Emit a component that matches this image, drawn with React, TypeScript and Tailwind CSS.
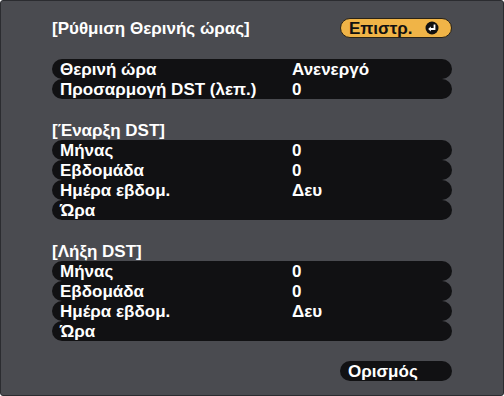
import React from 'react';

const font = { fontFamily: '"Liberation Sans", Arial, sans-serif' };

type Row = { label: string; value?: string };

const topRows: Row[] = [
  { label: 'Θερινή ώρα', value: 'Ανενεργό' },
  { label: 'Προσαρμογή DST (λεπ.)', value: '0' },
];

const dstRows: Row[] = [
  { label: 'Μήνας', value: '0' },
  { label: 'Εβδομάδα', value: '0' },
  { label: 'Ημέρα εβδομ.', value: 'Δευ' },
  { label: 'Ώρα' },
];

const RowList = ({ rows }: { rows: Row[] }) => (
  <div className="flex flex-col">
    {rows.map((r, i) => (
      <div key={i} className="flex h-[20px] items-center rounded-full bg-[#111113] pl-[8px] text-white leading-none">
        <span className="w-[232px] shrink-0">{r.label}</span>
        <span>{r.value}</span>
      </div>
    ))}
  </div>
);

const EnterIcon = () => (
  <svg width="14" height="14" viewBox="0 0 14 14">
    <circle cx="7" cy="7" r="6.5" fill="#111" />
    <path d="M9.5 3.5 V8 H5" stroke="#fff" strokeWidth="1.8" fill="none" />
    <path d="M3.2 8 L5.8 5.6 V10.4 Z" fill="#fff" />
  </svg>
);

export default function App() {
  return (
    <div style={font} className="w-[504px] h-[396px] bg-[#4a4b50] border border-[#2b2c30] rounded-[3px] text-[17px] font-bold overflow-hidden">
      <div className="flex flex-col pl-[51px] pr-[51px] pt-[17px]">
        <div className="flex items-center justify-between h-[20px]">
          <span className="text-white leading-none">[Ρύθμιση Θερινής ώρας]</span>
          <div className="flex items-center gap-[12px] h-[20px] w-[112px] rounded-full bg-[#f0b447] border border-[#2a2315] pl-[8px] text-[#111] leading-none">
            <span>Επιστρ.</span>
            <EnterIcon />
          </div>
        </div>

        <div className="mt-[21px]">
          <RowList rows={topRows} />
        </div>

        <div className="mt-[22px] h-[19px] text-white leading-none flex items-center">[Έναρξη DST]</div>
        <RowList rows={dstRows} />

        <div className="mt-[22px] h-[19px] text-white leading-none flex items-center">[Λήξη DST]</div>
        <RowList rows={dstRows} />

        <div className="mt-[20px] flex justify-end">
          <div className="flex items-center h-[20px] w-[112px] rounded-full bg-[#111113] pl-[8px] text-white leading-none">
            Ορισμός
          </div>
        </div>
      </div>
    </div>
  );
}
